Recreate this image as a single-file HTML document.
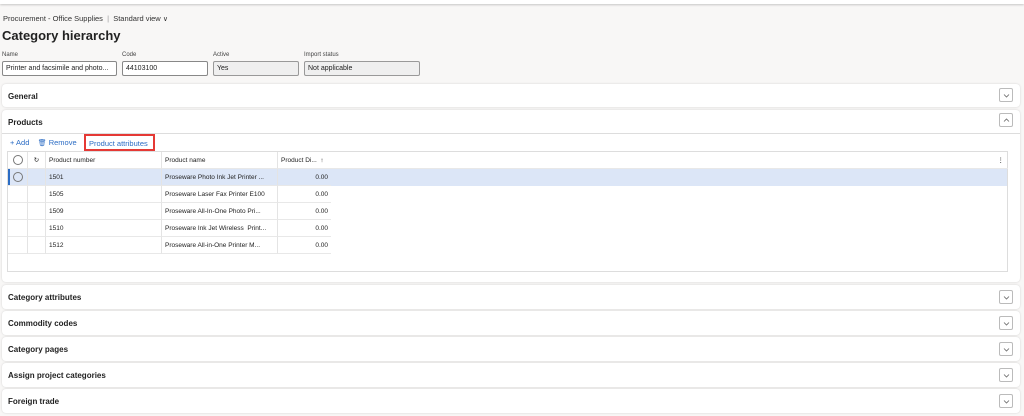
<!DOCTYPE html><html><head><style>
*{box-sizing:border-box;margin:0;padding:0}
body{width:1024px;height:416px;background:#f8f7f6;font-family:"Liberation Sans",sans-serif;color:#222;position:relative;overflow:hidden}
.a{position:absolute}
.topbar{left:0;top:0;width:1024px;height:4px;background:#fff;box-shadow:0 1px 2px rgba(0,0,0,.2)}
.lbl{font-size:6px;color:#444}
.inp{height:15px;border:1px solid #888;border-radius:2px;background:#fff;font-size:7px;padding:3px 3px;white-space:nowrap;overflow:hidden}
.ro{background:#efefef;border-color:#999}
.card{left:2px;width:1018px;background:#fff;border-radius:4px;box-shadow:0 0 2px rgba(0,0,0,.15)}
.ct{position:absolute;left:6px;font-size:8px;font-weight:bold;color:#222}
.chev{position:absolute;right:7px;width:14px;height:14px;border:1px solid #bbb;border-radius:2px;background:#fff}
.chev svg{position:absolute;left:3px;top:3px}
.grid{left:7px;top:151px;width:1001px;height:121px;border:1px solid #ddd;background:#fff}
.row{position:absolute;left:0;height:17px;font-size:6.5px}
.row div{position:absolute;top:0;height:17px;line-height:17px;border-right:1px solid #e4e4e4;border-bottom:1px solid #e8e8e8;padding-left:3px;white-space:nowrap;overflow:hidden}
.rad{width:10px;height:10px;border:1px solid #777;border-radius:50%;position:absolute;left:5px;top:3px}
</style></head><body>
<div class="a topbar"></div>
<div class="a" style="left:3px;top:14px;font-size:7.5px;color:#333">Procurement - Office Supplies &nbsp;<span style="color:#999">|</span>&nbsp; Standard view <span style="font-size:7px">&#x2228;</span></div>
<div class="a" style="left:2px;top:28px;font-size:13px;font-weight:bold;color:#222">Category hierarchy</div>
<div class="a lbl" style="left:2px;top:52px">Name</div>
<div class="a inp" style="left:2px;top:61px;width:115px">Printer and facsimile and photo...</div>
<div class="a lbl" style="left:122px;top:52px">Code</div>
<div class="a inp" style="left:122px;top:61px;width:86px">44103100</div>
<div class="a lbl" style="left:213px;top:52px">Active</div>
<div class="a inp ro" style="left:213px;top:61px;width:86px">Yes</div>
<div class="a lbl" style="left:304px;top:52px">Import status</div>
<div class="a inp ro" style="left:304px;top:61px;width:116px">Not applicable</div>

<div class="a card" style="top:84px;height:23px"><div class="ct" style="top:8px">General</div><div class="chev" style="top:4px"><svg width="7" height="7"><path d="M1 2.5L3.5 5L6 2.5" stroke="#666" fill="none" stroke-width=".8"/></svg></div></div>

<div class="a card" style="top:110px;height:172px">
<div class="ct" style="top:8px">Products</div><div class="chev" style="top:3px"><svg width="7" height="7"><path d="M1 4.5L3.5 2L6 4.5" stroke="#666" fill="none" stroke-width=".8"/></svg></div>
<div style="position:absolute;left:0;top:23px;width:100%;border-top:1px solid #ddd"></div>
<div style="position:absolute;left:8px;top:28px;font-size:7.5px;color:#2b6cc4">+ Add &nbsp;&nbsp; <span style="font-size:7px">&#x1F5D1;</span> Remove</div>
<div style="position:absolute;left:82px;top:24px;width:71px;height:17px;border:2px solid #e53935;font-size:7.5px;color:#2b6cc4;padding:3px 3px;white-space:nowrap">Product attributes</div>
</div>
<div class="a grid">
<div class="row" style="top:0;width:1000px;font-size:6.5px">
<div style="left:0;width:20px"><span class="rad"></span></div>
<div style="left:20px;width:18px;text-align:center;padding:0">&#x21BB;</div>
<div style="left:38px;width:116px">Product number</div>
<div style="left:154px;width:116px">Product name</div>
<div style="left:270px;width:730px;border-right:none">Product Di... &nbsp;&#x2191;<span style="position:absolute;right:4px">&#x22EE;</span></div>
</div>
<div class="a" style="left:0;top:17px;width:999px;height:17px;background:#dce6f7;border-left:2px solid #2b6cc4"></div>
<div class="row" style="top:17px"><div style="left:0;width:20px"><span class="rad"></span></div><div style="left:20px;width:18px"></div><div style="left:38px;width:116px">1501</div><div style="left:154px;width:116px">Proseware Photo Ink Jet Printer ...</div><div style="left:270px;width:53px;text-align:right;padding-right:3px;border-right:none">0.00</div></div>
<div class="row" style="top:34px"><div style="left:0;width:20px"></div><div style="left:20px;width:18px"></div><div style="left:38px;width:116px">1505</div><div style="left:154px;width:116px">Proseware Laser Fax Printer E100</div><div style="left:270px;width:53px;text-align:right;padding-right:3px;border-right:none">0.00</div></div>
<div class="row" style="top:51px"><div style="left:0;width:20px"></div><div style="left:20px;width:18px"></div><div style="left:38px;width:116px">1509</div><div style="left:154px;width:116px">Proseware All-In-One Photo Pri...</div><div style="left:270px;width:53px;text-align:right;padding-right:3px;border-right:none">0.00</div></div>
<div class="row" style="top:68px"><div style="left:0;width:20px"></div><div style="left:20px;width:18px"></div><div style="left:38px;width:116px">1510</div><div style="left:154px;width:116px">Proseware Ink Jet Wireless &nbsp;Print...</div><div style="left:270px;width:53px;text-align:right;padding-right:3px;border-right:none">0.00</div></div>
<div class="row" style="top:85px"><div style="left:0;width:20px"></div><div style="left:20px;width:18px"></div><div style="left:38px;width:116px">1512</div><div style="left:154px;width:116px">Proseware All-in-One Printer M...</div><div style="left:270px;width:53px;text-align:right;padding-right:3px;border-right:none">0.00</div></div>
</div>

<div class="a card" style="top:285px;height:24px"><div class="ct" style="top:8px">Category attributes</div><div class="chev" style="top:5px"><svg width="7" height="7"><path d="M1 2.5L3.5 5L6 2.5" stroke="#666" fill="none" stroke-width=".8"/></svg></div></div>
<div class="a card" style="top:311px;height:24px"><div class="ct" style="top:8px">Commodity codes</div><div class="chev" style="top:5px"><svg width="7" height="7"><path d="M1 2.5L3.5 5L6 2.5" stroke="#666" fill="none" stroke-width=".8"/></svg></div></div>
<div class="a card" style="top:337px;height:24px"><div class="ct" style="top:8px">Category pages</div><div class="chev" style="top:5px"><svg width="7" height="7"><path d="M1 2.5L3.5 5L6 2.5" stroke="#666" fill="none" stroke-width=".8"/></svg></div></div>
<div class="a card" style="top:363px;height:24px"><div class="ct" style="top:8px">Assign project categories</div><div class="chev" style="top:5px"><svg width="7" height="7"><path d="M1 2.5L3.5 5L6 2.5" stroke="#666" fill="none" stroke-width=".8"/></svg></div></div>
<div class="a card" style="top:389px;height:24px"><div class="ct" style="top:8px">Foreign trade</div><div class="chev" style="top:5px"><svg width="7" height="7"><path d="M1 2.5L3.5 5L6 2.5" stroke="#666" fill="none" stroke-width=".8"/></svg></div></div>
</body></html>
